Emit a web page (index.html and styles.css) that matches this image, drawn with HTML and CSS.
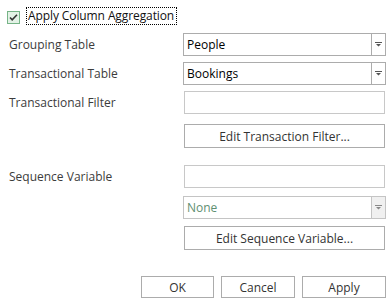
FILE: index.html
```html
<!DOCTYPE html>
<html lang="en">
<head>
    <meta charset="UTF-8">
    <title>Column Aggregation</title>
    <link rel="stylesheet" href="styles.css">
</head>
<body>
    <div class="dialog">
        <div class="check-row">
            <span class="checkbox">
                <svg width="13" height="13" viewBox="0 0 13 13"><rect x="0.5" y="0.5" width="12" height="12" fill="#e3f2e6" stroke="#76b487"/><path d="M3 6.5l2.2 2.3L10 3.8" fill="none" stroke="#333" stroke-width="1.6"/></svg>
            </span>
            <span class="check-label">Apply Column Aggregation</span>
        </div>

        <div class="form">
            <div class="row r-group">
                <label>Grouping Table</label>
                <div class="combo">
                    <span class="combo-text">People</span>
                    <span class="combo-btn"><svg width="7" height="5" viewBox="0 0 7 5"><path d="M0 0h7v1H0z M1 2h5L3.5 4.5z" fill="#555"/></svg></span>
                </div>
            </div>
            <div class="row r-trans">
                <label>Transactional Table</label>
                <div class="combo">
                    <span class="combo-text">Bookings</span>
                    <span class="combo-btn"><svg width="7" height="5" viewBox="0 0 7 5"><path d="M0 0h7v1H0z M1 2h5L3.5 4.5z" fill="#555"/></svg></span>
                </div>
            </div>
            <div class="row r-filter">
                <label>Transactional Filter</label>
                <div class="textbox"></div>
            </div>
            <div class="row r-filter-btn">
                <span></span>
                <button class="btn wide">Edit Transaction Filter...</button>
            </div>
            <div class="row r-seq">
                <label>Sequence Variable</label>
                <div class="textbox"></div>
            </div>
            <div class="row r-none">
                <span></span>
                <div class="combo disabled">
                    <span class="combo-text">None</span>
                    <span class="combo-btn"><svg width="7" height="5" viewBox="0 0 7 5"><path d="M0 0h7v1H0z M1 2h5L3.5 4.5z" fill="#888"/></svg></span>
                </div>
            </div>
            <div class="row r-seq-btn">
                <span></span>
                <button class="btn wide">Edit Sequence Variable...</button>
            </div>
        </div>

        <div class="actions">
            <button class="btn ok">OK</button>
            <button class="btn cancel">Cancel</button>
            <button class="btn apply">Apply</button>
        </div>
    </div>
</body>
</html>
```

FILE: styles.css
```css
body {
    margin: 0;
    background: #fff;
    font-family: 'Open Sans', 'Noto Sans', sans-serif;
    font-size: 12px;
    color: #333;
}
.dialog {
    width: 392px;
    height: 300px;
    padding: 7px 6px 0 9px;
    box-sizing: border-box;
}
.check-row {
    display: flex;
    align-items: center;
    height: 18px;
    margin-left: -2px;
}
.checkbox {
    width: 13px;
    height: 13px;
    display: flex;
    margin-top: 4px;
    align-self: flex-start;
}
.check-label {
    margin-left: 6px;
    border: 1px dotted #000;
    height: 16px;
    line-height: 16px;
    padding: 0 2px 0 1px;
    color: #111;
    letter-spacing: -0.1px;
}
.form {
    display: flex;
    flex-direction: column;
}
.row {
    display: grid;
    grid-template-columns: 174px 203px;
    align-items: center;
}
.row label {
    color: #3c3c3c;
}
.r-group { margin-top: 8px; }
.r-trans { margin-top: 6px; }
.r-filter { margin-top: 6px; }
.r-filter-btn { margin-top: 10px; }
.r-seq { margin-top: 17px; }
.r-none { margin-top: 8px; }
.r-seq-btn { margin-top: 7px; }
.combo {
    height: 23px;
    border: 1px solid #acacac;
    box-sizing: border-box;
    display: flex;
    background: #fff;
}
.combo-text {
    flex: 1;
    padding-left: 3px;
    line-height: 21px;
    color: #000;
}
.combo-btn {
    width: 13px;
    border-left: 1px solid #acacac;
    display: flex;
    align-items: center;
    justify-content: center;
}
.combo.disabled {
    border-color: #c4c4c4;
}
.combo.disabled .combo-text {
    color: #5f8f72;
}
.combo.disabled .combo-btn {
    background: #f0f0f0;
    border-left-color: #c4c4c4;
}
.textbox {
    height: 23px;
    border: 1px solid #c8c8c8;
    box-sizing: border-box;
    margin-left: 1px;
    width: 201px;
}
.btn {
    font-family: inherit;
    font-size: 12px;
    color: #333;
    background: #fff;
    border: 1px solid #acacac;
    box-sizing: border-box;
    padding: 0;
    height: 22px;
}
.btn.wide {
    height: 24px;
    margin-left: 1px;
    width: 201px;
}
.actions {
    display: flex;
    gap: 7px;
    margin-top: 26px;
    padding-left: 132px;
}
.ok { width: 73px; }
.cancel { width: 74px; }
.apply { width: 84px; }
```
